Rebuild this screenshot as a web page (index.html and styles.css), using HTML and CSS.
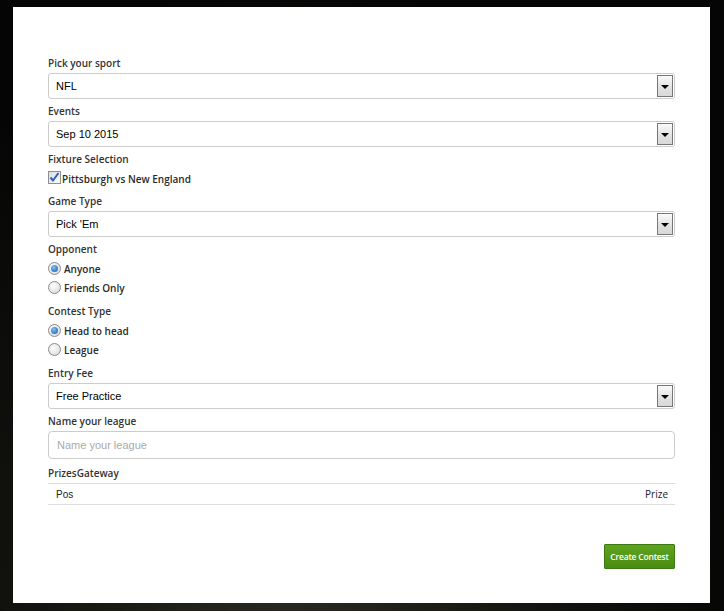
FILE: index.html
```html
<!DOCTYPE html>
<html>
<head>
<meta charset="utf-8">
<link rel="stylesheet" href="styles.css">
</head>
<body>
<div class="bg">
  <div class="panel">
    <div class="group">
      <div class="label">Pick your sport</div>
      <div class="select"><span class="val">NFL</span><span class="arrow"><i></i></span></div>
    </div>
    <div class="group">
      <div class="label">Events</div>
      <div class="select"><span class="val">Sep 10 2015</span><span class="arrow"><i></i></span></div>
    </div>
    <div class="group">
      <div class="label">Fixture Selection</div>
      <div class="check-row"><span class="checkbox"><svg width="13" height="13" viewBox="0 0 13 13"><path d="M2.5 6.5 L5 9.5 L10.5 2" fill="none" stroke="#2a5fc4" stroke-width="2"/></svg></span><span class="opt">Pittsburgh vs New England</span></div>
    </div>
    <div class="group">
      <div class="label">Game Type</div>
      <div class="select"><span class="val">Pick 'Em</span><span class="arrow"><i></i></span></div>
    </div>
    <div class="group">
      <div class="label">Opponent</div>
      <div class="radio-row"><span class="radio on"></span><span class="opt">Anyone</span></div>
      <div class="radio-row"><span class="radio"></span><span class="opt">Friends Only</span></div>
    </div>
    <div class="group">
      <div class="label">Contest Type</div>
      <div class="radio-row"><span class="radio on"></span><span class="opt">Head to head</span></div>
      <div class="radio-row"><span class="radio"></span><span class="opt">League</span></div>
    </div>
    <div class="group">
      <div class="label">Entry Fee</div>
      <div class="select"><span class="val">Free Practice</span><span class="arrow"><i></i></span></div>
    </div>
    <div class="group">
      <div class="label">Name your league</div>
      <div class="input"><span class="ph">Name your league</span></div>
    </div>
    <div class="group">
      <div class="label">PrizesGateway</div>
      <div class="table-row"><span>Pos</span><span class="prize">Prize</span></div>
    </div>
    <div class="actions"><span class="btn">Create Contest</span></div>
  </div>
</div>
</body>
</html>
```
FILE: styles.css
```css
html, body { margin: 0; padding: 0; }
body {
  width: 724px; height: 611px; overflow: hidden;
  background: radial-gradient(ellipse at 40% 110%, #2b2a22 0%, #141410 40%, #050505 75%), #000;
}
.bg { padding: 7px 14px 0 13px; }
.panel {
  background: #fff;
  width: 627px;
  height: 547px;
  padding: 49px 35px 0 35px;
}
.group { margin-bottom: 5px; }
.label {
  font-family: "Open Sans", sans-serif;
  font-weight: 600;
  font-size: 10px;
  line-height: 15px;
  color: #333;
  margin-bottom: 2px;
}
.select {
  height: 24px;
  border: 1px solid #ccc;
  border-radius: 3px;
  display: flex;
  align-items: center;
  justify-content: space-between;
  font-family: "Liberation Sans", Arial, sans-serif;
  font-size: 11px;
  color: #000;
}
.select .val { padding-left: 7px; }
.arrow {
  width: 14px; height: 20px;
  margin-right: 1px;
  border: 1px solid #777;
  background: linear-gradient(#fafafa, #e2e2e2 55%, #d8d8d8);
  display: flex; align-items: center; justify-content: center;
}
.arrow i {
  width: 0; height: 0;
  border-left: 4px solid transparent;
  border-right: 4px solid transparent;
  border-top: 4px solid #000;
  margin-top: 1px;
}
.check-row { height: 20px; display: flex; align-items: center; }
.checkbox {
  width: 11px; height: 11px;
  border: 1px solid #8e8f8f;
  background: linear-gradient(135deg, #dcdcdc, #fbfbfb);
  position: relative;
  margin-top: -4px;
}
.checkbox svg { position: absolute; left: -1px; top: -1px; }
.opt {
  font-family: "Open Sans", sans-serif;
  font-size: 10px;
  color: #2a2a2a;
  font-weight: 600;
}
.check-row .opt { margin-left: 1px; }
.radio-row { height: 19px; display: flex; align-items: center; }
.radio {
  width: 11px; height: 11px;
  border-radius: 50%;
  border: 1px solid #8b8b8b;
  background: radial-gradient(circle at 40% 35%, #fff, #d4d4d4);
  margin-right: 3px;
  position: relative;
}
.radio.on::after {
  content: ""; position: absolute; left: 2px; top: 2px;
  width: 7px; height: 7px; border-radius: 50%;
  background: radial-gradient(circle at 40% 35%, #7ec0ff, #1557a8);
}
.group:nth-child(5) { margin-bottom: 7px; }
.group:nth-child(6) { margin-bottom: 7px; }
.input {
  height: 26px;
  border: 1px solid #ccc;
  border-radius: 4px;
  display: flex; align-items: center;
  font-family: "Liberation Sans", Arial, sans-serif;
  font-size: 11px;
}
.input .ph { color: #aaa; padding-left: 8px; }
.group:nth-child(8) { margin-bottom: 7px; }
.table-row {
  height: 20px;
  border-top: 1px solid #ddd;
  border-bottom: 1px solid #ddd;
  display: flex; align-items: center; justify-content: space-between;
  padding: 0 7px 0 8px;
  font-family: "Liberation Sans", Arial, sans-serif;
  font-size: 10px;
  color: #222;
}
.prize { font-family: "Open Sans", sans-serif; }
.actions { display: flex; justify-content: flex-end; margin-top: 39px; }
.btn {
  width: 69px; height: 23px;
  border: 1px solid #3e7a12;
  border-radius: 1px;
  background: linear-gradient(#5ea41f, #4a8c12);
  color: #fff;
  font-family: "Open Sans", sans-serif;
  font-weight: 600;
  font-size: 8.5px;
  display: flex; align-items: center; justify-content: center;
  letter-spacing: -0.2px;
}
```
